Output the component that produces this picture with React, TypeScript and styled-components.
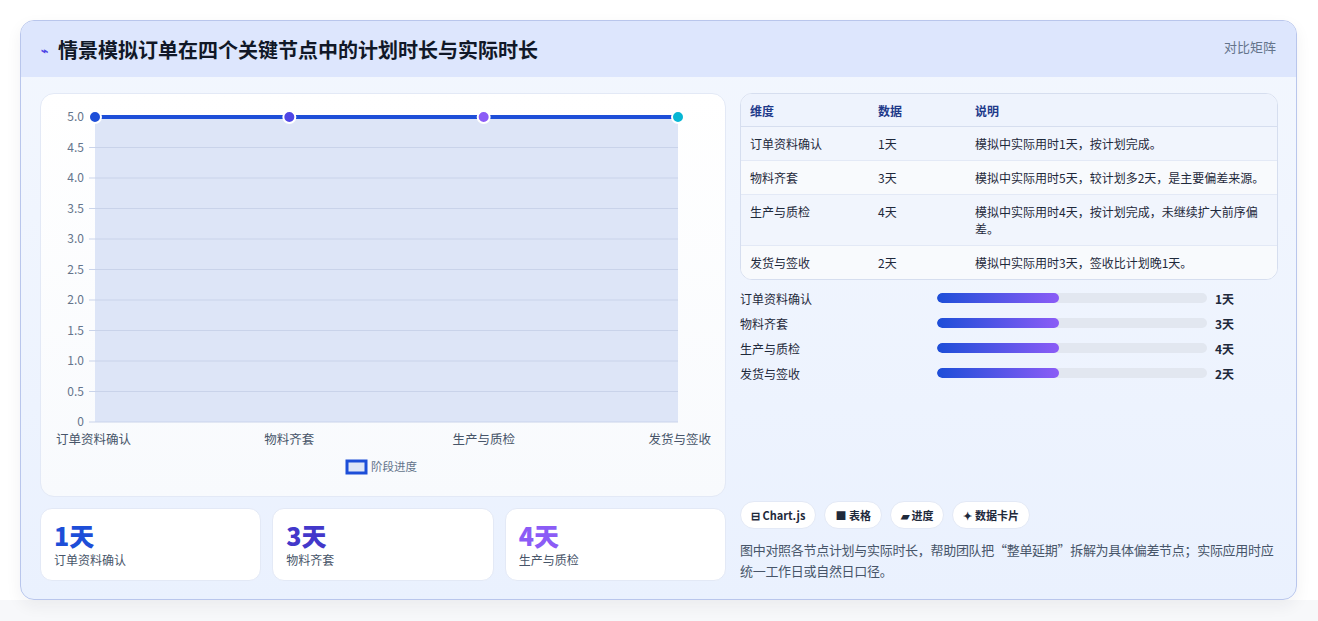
import React from "react";
import styled, { createGlobalStyle } from "styled-components";

const Global = createGlobalStyle`
  html, body { margin: 0; padding: 0; background: #fff; }
  body { font-family: "Noto Sans CJK SC", "Liberation Sans", sans-serif; color: #1e293b; }
  * { box-sizing: border-box; }
`;

const Page = styled.div`
  width: 1318px; height: 621px; padding: 20px 21px 0 20px;
  background: linear-gradient(#fff 0 600px, #f7f8fa 600px);
`;
const Card = styled.div`
  width: 1277px; height: 580px; border: 1px solid #b9c6ec; border-radius: 14px;
  background: linear-gradient(180deg, #f3f7fe 0%, #eaf1fe 100%);
  overflow: hidden; box-shadow: 0 6px 16px rgba(30,41,59,0.06);
  display: flex; flex-direction: column;
`;
const Header = styled.div`
  height: 56px; background: #dde6fd; display: flex; align-items: center; justify-content: space-between;
  padding: 0 20px 0 20px;
`;
const Title = styled.h1`
  margin: 0; font-size: 20px; font-weight: 700; color: #111827; display: flex; align-items: center; gap: 10px;
`;
const Tag = styled.span`
  font-size: 13px; color: #64748b; align-self: flex-start; margin-top: 16px;
`;
const Body = styled.div`
  flex: 1; display: grid; grid-template-columns: 686px 538px; gap: 14px; padding: 16px 18px 18px 19px;
`;
const Col = styled.div` display: flex; flex-direction: column; gap: 11px; `;
const ChartCard = styled.div`
  height: 404px; background: linear-gradient(#fff, #f8fafd); border: 1px solid #e3e9f6; border-radius: 14px;
`;
const Stats = styled.div` display: grid; grid-template-columns: repeat(3, 1fr); gap: 11px; `;
const Stat = styled.div`
  height: 73px; background: #fff; border: 1px solid #e3e9f6; border-radius: 12px; padding: 10px 13px;
`;
const StatNum = styled.div<{ $c: string }>`
  font-size: 25px; font-weight: 800; color: ${p => p.$c}; line-height: 32px;
`;
const StatLabel = styled.div` font-size: 12px; color: #475569; `;

const Table = styled.table`
  width: 100%; border-collapse: separate; border-spacing: 0; background: #fff;
  border: 1px solid #d6deef; border-radius: 12px; overflow: hidden; font-size: 12px;
`;
const Th = styled.th`
  text-align: left; font-weight: 600; color: #1e3a8a; background: #eef3fd; height: 33px; padding: 0 9px;
  border-bottom: 1px solid #d6deef;
`;
const Td = styled.td<{ $alt?: boolean; $last?: boolean }>`
  padding: 8px 9px; color: #1e293b; line-height: 17px; vertical-align: top;
  background: ${p => (p.$alt ? "#f8fafd" : "#f1f5fd")};
  border-bottom: ${p => (p.$last ? "none" : "1px solid #e3e9f6")};
`;
const Bars = styled.div` display: flex; flex-direction: column; gap: 7px; margin-top: 9px; `;
const BarRow = styled.div`
  display: grid; grid-template-columns: 189px 270px 1fr; align-items: center; column-gap: 8px;
  font-size: 12px; height: 18px;
`;
const Track = styled.div` height: 10px; border-radius: 5px; background: #e2e7f0; overflow: hidden; `;
const Fill = styled.div` height: 100%; border-radius: 5px; background: linear-gradient(90deg, #1d4ed8, #8b5cf6); `;
const Val = styled.span` font-weight: 700; `;
const Chips = styled.div` display: flex; gap: 8px; margin-top: auto; `;
const Chip = styled.span`
  background: #fff; border: 1px solid #e3e9f6; border-radius: 14px; height: 28px; padding: 0 10px;
  display: inline-flex; align-items: center; gap: 3px; font-size: 11px; font-weight: 600; color: #1e293b;
`;
const Note = styled.p`
  margin: 10px 0 0; font-size: 13px; line-height: 21px; color: #475569; letter-spacing: -0.3px;
`;

const rows = [
  ["订单资料确认", "1天", "模拟中实际用时1天，按计划完成。"],
  ["物料齐套", "3天", "模拟中实际用时5天，较计划多2天，是主要偏差来源。"],
  ["生产与质检", "4天", "模拟中实际用时4天，按计划完成，未继续扩大前序偏差。"],
  ["发货与签收", "2天", "模拟中实际用时3天，签收比计划晚1天。"],
];

function Chart() {
  const x0 = 54, x1 = 637, yTop = 23, yBot = 328;
  const ticks = Array.from({ length: 11 }, (_, i) => i * 0.5);
  const xs = [0, 1, 2, 3].map(i => x0 + ((x1 - x0) * i) / 3);
  const colors = ["#1d4ed8", "#4f46e5", "#8b5cf6", "#06b6d4"];
  const labels = ["订单资料确认", "物料齐套", "生产与质检", "发货与签收"];
  return (
    <svg width="684" height="402" style={{ display: "block" }} fontFamily='"Noto Sans CJK SC", "Liberation Sans", sans-serif'>
      <rect x={x0} y={yTop} width={x1 - x0} height={yBot - yTop} fill="#dde5f7" />
      {ticks.map(t => {
        const y = yBot - (t / 5) * (yBot - yTop);
        return (
          <g key={t}>
            <line x1={x0 - 6} x2={x1} y1={y} y2={y} stroke="#c9d3ea" strokeWidth="1" />
            <text x={x0 - 11} y={y + 4} fontSize="12" fill="#64748b" textAnchor="end">{t === 0 ? "0" : t.toFixed(1)}</text>
          </g>
        );
      })}
      <line x1={x0} x2={x1} y1={yTop} y2={yTop} stroke="#1d4ed8" strokeWidth="4" />
      {xs.map((x, i) => (
        <circle key={i} cx={x} cy={yTop} r="6" fill={colors[i]} stroke="#fff" strokeWidth="2" />
      ))}
      {xs.map((x, i) => (
        <text key={i} x={i === 0 ? x - 39 : i === 3 ? x + 33 : x} y={350} fontSize="12.5" fill="#475569"
          textAnchor={i === 0 ? "start" : i === 3 ? "end" : "middle"}>{labels[i]}</text>
      ))}
      <rect x={306} y={367} width={19} height={12} fill="#dde5f7" stroke="#1d4ed8" strokeWidth="3" />
      <text x={330} y={377} fontSize="11.5" fill="#64748b">阶段进度</text>
    </svg>
  );
}

export default function App() {
  return (
    <>
      <Global />
      <Page>
        <Card>
          <Header>
            <Title><span style={{ color: "#4f46e5", fontSize: 12 }}>⌁</span>情景模拟订单在四个关键节点中的计划时长与实际时长</Title>
            <Tag>对比矩阵</Tag>
          </Header>
          <Body>
            <Col>
              <ChartCard><Chart /></ChartCard>
              <Stats>
                <Stat><StatNum $c="#1d4ed8">1天</StatNum><StatLabel>订单资料确认</StatLabel></Stat>
                <Stat><StatNum $c="#4338ca">3天</StatNum><StatLabel>物料齐套</StatLabel></Stat>
                <Stat><StatNum $c="#8b5cf6">4天</StatNum><StatLabel>生产与质检</StatLabel></Stat>
              </Stats>
            </Col>
            <Col style={{ gap: 0 }}>
              <Table>
                <thead>
                  <tr><Th style={{ width: 128 }}>维度</Th><Th style={{ width: 97 }}>数据</Th><Th>说明</Th></tr>
                </thead>
                <tbody>
                  {rows.map((r, i) => (
                    <tr key={i}>
                      {r.map((c, j) => <Td key={j} $alt={i % 2 === 1} $last={i === 3}>{c}</Td>)}
                    </tr>
                  ))}
                </tbody>
              </Table>
              <Bars>
                {rows.map(r => (
                  <BarRow key={r[0]}>
                    <span>{r[0]}</span>
                    <Track><Fill style={{ width: "45%" }} /></Track>
                    <Val>{r[1]}</Val>
                  </BarRow>
                ))}
              </Bars>
              <Chips>
                <Chip>⊟ Chart.js</Chip>
                <Chip>■ 表格</Chip>
                <Chip>▰ 进度</Chip>
                <Chip>✦ 数据卡片</Chip>
              </Chips>
              <Note>图中对照各节点计划与实际时长，帮助团队把“整单延期”拆解为具体偏差节点；实际应用时应统一工作日或自然日口径。</Note>
            </Col>
          </Body>
        </Card>
      </Page>
    </>
  );
}
